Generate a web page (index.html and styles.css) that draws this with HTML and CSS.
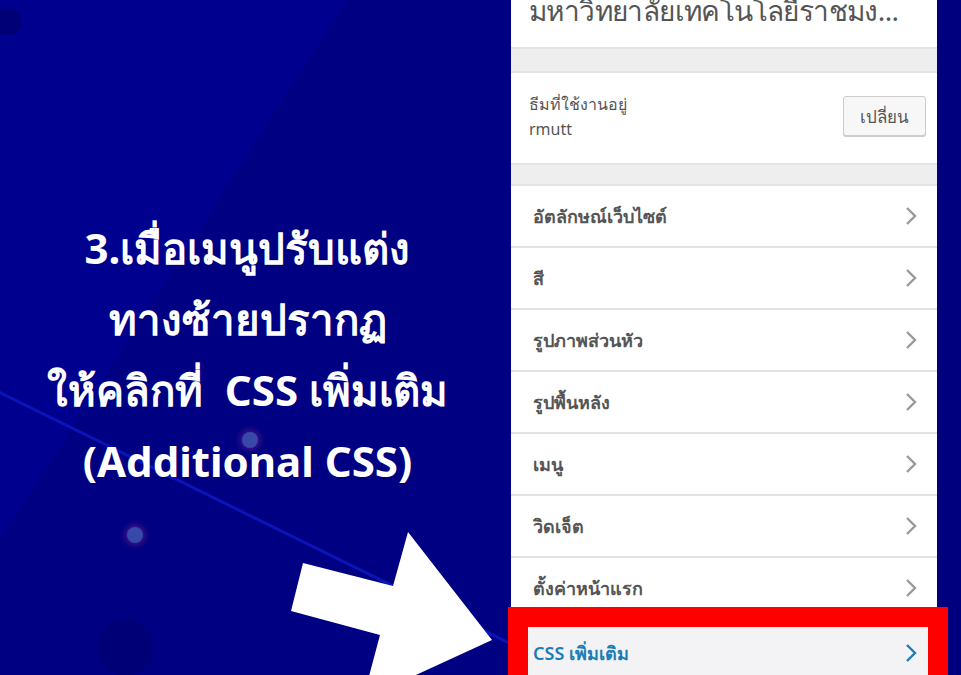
FILE: index.html
```html
<!DOCTYPE html>
<html lang="th">
<head>
    <meta charset="UTF-8">
    <title>เมนูปรับแต่ง</title>
    <link rel="stylesheet" href="styles.css">
</head>
<body>

<div class="slide">
    <div class="shade"></div>
    <div class="streak"></div>
    <div class="dot dot-a"></div>
    <div class="dot dot-b"></div>
    <div class="blob blob-a"></div>
    <div class="blob blob-b"></div>

    <div class="caption">
        <p>3.เมื่อเมนูปรับแต่ง</p>
        <p>ทางซ้ายปรากฏ</p>
        <p>ให้คลิกที่&nbsp; CSS เพิ่มเติม</p>
        <p>(Additional CSS)</p>
    </div>

    <div class="panel">
        <div class="site-title"><span>มหาวิทยาลัยเทคโนโลยีราชมง...</span></div>
        <div class="gap"></div>
        <div class="theme">
            <div class="theme-info">
                <span>ธีมที่ใช้งานอยู่</span>
                <strong>rmutt</strong>
            </div>
            <button class="change-btn">เปลี่ยน</button>
        </div>
        <div class="gap gap-small"></div>
        <ul class="menu">
            <li>อัตลักษณ์เว็บไซต์ <svg viewBox="0 0 12 20"><polyline points="2,2 10,10 2,18"/></svg></li>
            <li>สี <svg viewBox="0 0 12 20"><polyline points="2,2 10,10 2,18"/></svg></li>
            <li>รูปภาพส่วนหัว <svg viewBox="0 0 12 20"><polyline points="2,2 10,10 2,18"/></svg></li>
            <li>รูปพื้นหลัง <svg viewBox="0 0 12 20"><polyline points="2,2 10,10 2,18"/></svg></li>
            <li>เมนู <svg viewBox="0 0 12 20"><polyline points="2,2 10,10 2,18"/></svg></li>
            <li>วิดเจ็ต <svg viewBox="0 0 12 20"><polyline points="2,2 10,10 2,18"/></svg></li>
            <li>ตั้งค่าหน้าแรก <svg viewBox="0 0 12 20"><polyline points="2,2 10,10 2,18"/></svg></li>
            <li class="active">CSS เพิ่มเติม <svg viewBox="0 0 12 20"><polyline points="2,2 10,10 2,18"/></svg></li>
        </ul>
    </div>

    <div class="edge"></div>

    <svg class="arrow" viewBox="0 0 961 675">
        <polygon points="303,563 393,586 408,532 492,640 405,680 368,680 380,635 291,611"/>
    </svg>
    <div class="highlight"></div>
</div>

</body>
</html>
```

FILE: styles.css
```css
* {
    box-sizing: border-box;
}
body {
    margin: 0;
    background: #000082;
    font-family: "Noto Sans", "DejaVu Sans", sans-serif;
}
.slide {
    position: relative;
    display: flex;
    width: 961px;
    height: 675px;
    overflow: hidden;
    background: #000082;
}

/* background decoration */
.shade {
    position: absolute;
    left: 0;
    top: 0;
    width: 400px;
    height: 600px;
    background: #00008f;
    clip-path: polygon(0 0, 347px 0, 0 540px);
}
.streak {
    position: absolute;
    left: -10px;
    top: 386px;
    width: 580px;
    height: 3px;
    background: #0a14b8;
    transform-origin: 0 0;
    transform: rotate(26.2deg);
}
.dot {
    position: absolute;
    width: 16px;
    height: 16px;
    border-radius: 50%;
    background: #3848a8;
    box-shadow: 0 0 6px 2px rgba(120, 40, 140, 0.6);
}
.dot-a { left: 242px; top: 432px; }
.dot-b { left: 127px; top: 527px; }
.blob {
    position: absolute;
    border-radius: 50%;
    background: #000076;
}
.blob-a { left: 97px; top: 620px; width: 56px; height: 56px; }
.blob-b { left: -6px; top: 8px; width: 28px; height: 28px; }

/* left caption */
.caption {
    position: relative;
    flex-shrink: 0;
    width: 511px;
    padding: 212px 16px 0 0;
    color: #fff;
    text-align: center;
    font-family: "Noto Sans", "DejaVu Sans", sans-serif;
    font-weight: 700;
    font-size: 42px;
    line-height: 71px;
    white-space: nowrap;
}
.caption p {
    margin: 0;
}

/* customizer panel */
.panel {
    position: relative;
    flex-shrink: 0;
    width: 426px;
    height: 675px;
    background: #fff;
    color: #555;
    display: flex;
    flex-direction: column;
}
.panel > * {
    flex-shrink: 0;
}
.site-title {
    height: 47px;
    overflow: hidden;
    padding: 0 18px;
    font-size: 28px;
    letter-spacing: -0.6px;
    white-space: nowrap;
}
.site-title span {
    display: block;
    margin-top: -12px;
    line-height: 44px;
}
.gap {
    height: 26px;
    background: #eeeeee;
    border-top: 2px solid #e4e4e4;
    border-bottom: 2px solid #e4e4e4;
}
.gap-small {
    height: 23px;
}
.theme {
    height: 90px;
    display: flex;
    align-items: center;
    justify-content: space-between;
    padding: 0 11px 0 18px;
}
.theme-info {
    display: flex;
    flex-direction: column;
    font-size: 16px;
    line-height: 25px;
    padding-bottom: 2px;
}
.theme-info strong {
    font-weight: 400;
}
.change-btn {
    width: 83px;
    height: 40px;
    font-family: inherit;
    font-size: 17px;
    color: #555;
    background: #f7f7f7;
    border: 1px solid #cccccc;
    border-radius: 3px;
    box-shadow: 0 1px 0 #ccc;
    padding: 0;
    margin-bottom: 4px;
}
.menu {
    list-style: none;
    margin: 0;
    padding: 0;
}
.menu li {
    height: 62px;
    display: flex;
    align-items: center;
    justify-content: space-between;
    padding: 0 20px 0 22px;
    border-bottom: 2px solid #e2e2e2;
    font-size: 18px;
    font-weight: 600;
    color: #555;
}
.menu li svg {
    width: 12px;
    height: 20px;
    fill: none;
    stroke: #999;
    stroke-width: 2.4;
}
.menu li.active {
    background: #f3f3f5;
    color: #1a7db5;
    padding-top: 4px;
    border-bottom: none;
}
.menu li.active svg {
    stroke: #1a7db5;
}
.edge {
    flex: 1;
    background: #00007e;
}

/* overlays */
.arrow {
    position: absolute;
    left: 0;
    top: 0;
    width: 961px;
    height: 675px;
    fill: #fff;
}
.highlight {
    position: absolute;
    left: 508px;
    top: 607px;
    width: 440px;
    height: 90px;
    border: 20px solid #ff0000;
}
```
